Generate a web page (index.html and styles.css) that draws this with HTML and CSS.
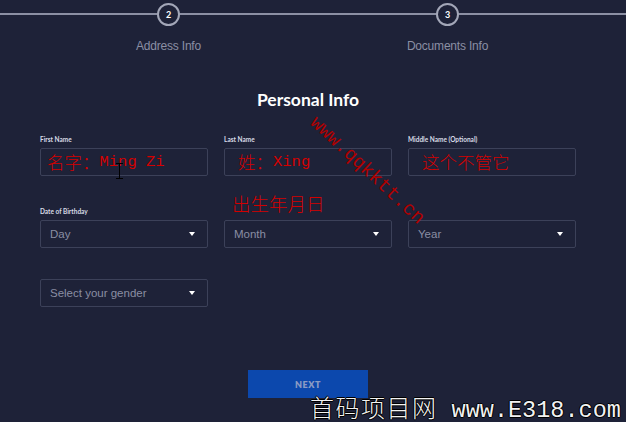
FILE: index.html
```html
<!DOCTYPE html>
<html>
<head>
<meta charset="utf-8">
<link rel="stylesheet" href="styles.css">
</head>
<body>
<div class="page">
  <div class="stepper">
    <div class="step">
      <div class="circle">2</div>
      <div class="step-label">Address Info</div>
    </div>
    <div class="step">
      <div class="circle">3</div>
      <div class="step-label">Documents Info</div>
    </div>
  </div>

  <h1 class="title">Personal Info</h1>

  <div class="form">
    <div class="row">
      <div class="group">
        <div class="label">First Name</div>
        <div class="field"><span class="wm-cjk">名字：</span><span class="wm-latin">Ming Zi</span></div>
      </div>
      <div class="group">
        <div class="label">Last Name</div>
        <div class="field field-indent"><span class="wm-cjk">姓：</span><span class="wm-latin">Xing</span></div>
      </div>
      <div class="group">
        <div class="label">Middle Name (Optional)</div>
        <div class="field field-indent"><span class="wm-cjk">这个不管它</span></div>
      </div>
    </div>

    <div class="row row-gap">
      <div class="group">
        <div class="label">Date of Birthday</div>
        <div class="select"><span>Day</span><span class="caret"></span></div>
      </div>
      <div class="group">
        <div class="label label-blank">&nbsp;</div>
        <div class="select"><span>Month</span><span class="caret"></span></div>
      </div>
      <div class="group">
        <div class="label label-blank">&nbsp;</div>
        <div class="select"><span>Year</span><span class="caret"></span></div>
      </div>
    </div>

    <div class="row row-gap3">
      <div class="group">
        <div class="select"><span>Select your gender</span><span class="caret"></span></div>
      </div>
    </div>

    <div class="actions">
      <button class="next">NEXT</button>
    </div>
  </div>

  <div class="wm-birth">出生年月日</div>
  <div class="wm-diag">www.qqkktt.cn</div>
  <div class="wm-bottom"><span class="wm-bottom-cjk">首码项目网</span> www.E318.com</div>
  <svg class="ibeam" width="7" height="16" viewBox="0 0 7 16"><path d="M0 0.5h7M0 15.5h7M3.5 0.5v15" stroke="#000" stroke-width="1" fill="none"/></svg>
</div>
</body>
</html>
```

FILE: styles.css
```css
html, body {
  margin: 0;
  padding: 0;
  background: #1e2238;
}
.page {
  position: relative;
  width: 626px;
  height: 422px;
  overflow: hidden;
  background: #1e2238;
  font-family: "Liberation Sans", Arial, sans-serif;
}
.stepper {
  position: relative;
  display: flex;
  padding-left: 29px;
  height: 60px;
}
.stepper::before {
  content: "";
  position: absolute;
  left: 0;
  right: 0;
  top: 13px;
  height: 2px;
  background: #8c90a4;
}
.step {
  position: relative;
  width: 279px;
  display: flex;
  flex-direction: column;
  align-items: center;
}
.circle {
  margin-top: 3px;
  width: 19px;
  height: 19px;
  border: 2px solid #a3a7b8;
  border-radius: 50%;
  background: #1e2238;
  color: #ffffff;
  font-family: Lato, "Liberation Sans", sans-serif;
  font-weight: 700;
  font-size: 9px;
  line-height: 19px;
  text-align: center;
}
.step-label {
  margin-top: 13px;
  font-size: 12px;
  line-height: 14px;
  color: #8b8fa4;
  letter-spacing: -0.2px;
}
.title {
  margin: 30px 0 0;
  height: 20px;
  text-align: center;
  font-family: Lato, "Liberation Sans", sans-serif;
  font-weight: 700;
  font-size: 17.5px;
  line-height: 20px;
  color: #ffffff;
  padding-right: 10px;
}
.form {
  width: 536px;
  margin-left: 40px;
  margin-top: 25px;
}
.row {
  display: grid;
  grid-template-columns: 168px 168px 168px;
  column-gap: 16px;
}
.row-gap { margin-top: 31px; }
.row-gap3 { margin-top: 31px; }
.label {
  font-family: Lato, "Liberation Sans", sans-serif;
  font-weight: 700;
  font-size: 6.5px;
  line-height: 8px;
  color: #d8dbe6;
  margin-top: 1px;
  margin-bottom: 4px;
  white-space: nowrap;
}
.field, .select {
  box-sizing: border-box;
  height: 28px;
  border: 1px solid #3c4159;
  border-radius: 2px;
  display: flex;
  align-items: center;
}
.field {
  padding-left: 6px;
  color: #d40000;
  white-space: nowrap;
}
.field-indent { padding-left: 13px; }
.wm-cjk {
  font-family: "Noto Sans CJK SC", sans-serif;
  font-size: 17.5px;
  font-weight: 300;
  line-height: 20px;
}
.wm-latin {
  font-family: "Liberation Mono", monospace;
  font-size: 15.5px;
  line-height: 20px;
}
.select {
  justify-content: space-between;
  padding: 0 12px 0 9px;
  font-size: 11.5px;
  color: #8a8ea3;
}
.caret {
  width: 0;
  height: 0;
  border-left: 3.5px solid transparent;
  border-right: 3.5px solid transparent;
  border-top: 4px solid #ffffff;
}
.actions {
  display: flex;
  justify-content: center;
  margin-top: 63px;
}
.next {
  width: 120px;
  height: 28px;
  border: none;
  background: #0c48ad;
  color: #8a9bc4;
  font-family: Lato, "Liberation Sans", sans-serif;
  font-weight: 800;
  font-size: 9px;
  letter-spacing: 0.5px;
  padding: 0;
}
.wm-birth {
  position: absolute;
  left: 232px;
  top: 191px;
  font-family: "Noto Sans CJK SC", sans-serif;
  font-weight: 300;
  font-size: 18.5px;
  line-height: 24px;
  color: #d40000;
}
.wm-diag {
  position: absolute;
  left: 313px;
  top: 110px;
  transform-origin: 0 50%;
  transform: rotate(43deg);
  font-family: "Liberation Mono", monospace;
  font-size: 19px;
  line-height: 20px;
  color: #b00000;
  white-space: nowrap;
}
.wm-bottom {
  position: absolute;
  left: 310px;
  top: 393px;
  font-family: "Liberation Mono", monospace;
  font-size: 23.5px;
  line-height: 27px;
  color: #f2f2f2;
  white-space: nowrap;
  text-shadow: 1px 0 0 #000, -1px 0 0 #000, 0 1px 0 #000, 0 -1px 0 #000;
}
.wm-bottom-cjk {
  font-family: "Noto Sans CJK SC", sans-serif;
  font-weight: 300;
  font-size: 24px;
  letter-spacing: 1.5px;
}
.ibeam {
  position: absolute;
  left: 116px;
  top: 163px;
}
```
